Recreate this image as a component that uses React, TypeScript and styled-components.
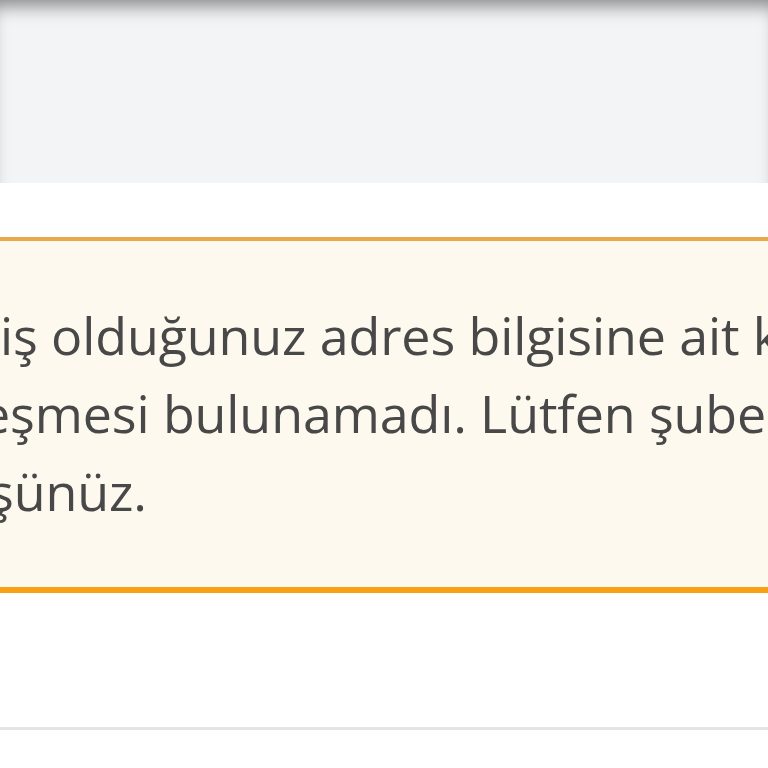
import styled, { createGlobalStyle } from "styled-components";

const GlobalStyle = createGlobalStyle`
  html, body {
    margin: 0;
    padding: 0;
    background: #ffffff;
    overflow: hidden;
  }
  body {
    font-family: "Open Sans", "Noto Sans", sans-serif;
  }
`;

const App = () => {
  return (
    <Page>
      <GlobalStyle />
      <TopArea />
      <Content>
        <Notice>
          <Line>iş olduğunuz adres bilgisine ait kurum</Line>
          <Line shift={-19}>eşmesi bulunamadı. Lütfen şubemizle</Line>
          <Line shift={-11}>şünüz.</Line>
        </Notice>
        <Divider />
      </Content>
    </Page>
  );
};

const Page = styled.div`
  width: 768px;
  height: 768px;
  overflow: hidden;
  display: flex;
  flex-direction: column;
  background: #ffffff;
`;

const TopArea = styled.div`
  height: 183px;
  flex-shrink: 0;
  background: #f3f4f6;
  box-shadow: inset 0 16px 18px -10px rgba(0, 0, 0, 0.45);
`;

const Content = styled.div`
  padding-top: 54px;
  display: flex;
  flex-direction: column;
`;

const Notice = styled.div`
  background: #fdf9ee;
  border-top: 4px solid #e9a94b;
  border-bottom: 6px solid #f7a012;
  padding: 55px 0 57px;
  overflow: hidden;
  color: #484848;
  font-size: 52px;
  line-height: 78px;
  letter-spacing: -0.12px;
`;

const Line = styled.div<{ shift?: number }>`
  white-space: nowrap;
  margin-left: ${(p) => p.shift ?? 0}px;
`;

const Divider = styled.div`
  margin-top: 134px;
  height: 3px;
  background: #e4e4e4;
`;

export default App;
